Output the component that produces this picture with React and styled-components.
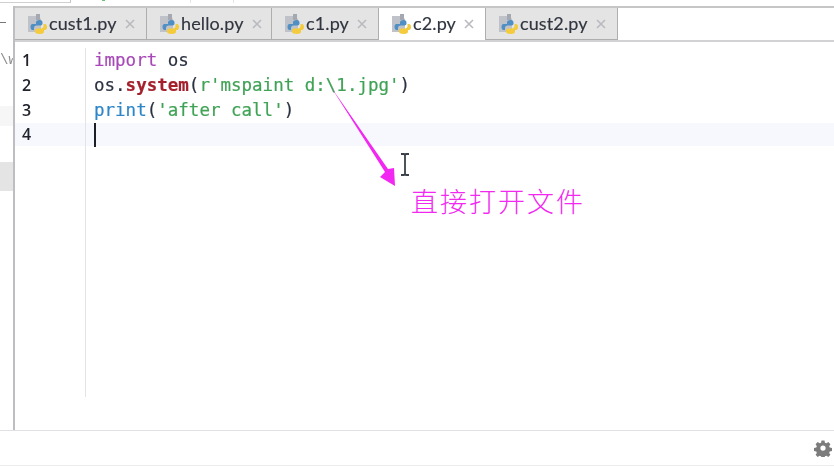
import React from 'react'
import styled, { createGlobalStyle } from 'styled-components'

const GlobalStyle = createGlobalStyle`
  html, body { margin: 0; padding: 0; background: #fff; }
  body { width: 834px; height: 466px; overflow: hidden; }
`

const Screen = styled.div`
  position: relative;
  width: 834px;
  height: 466px;
  display: flex;
  flex-direction: column;
  background: #fff;
  overflow: hidden;
`

const TopStrip = styled.div`
  height: 6px;
  display: flex;
  flex: none;
  filter: blur(0.4px);
`

const StripCell = styled.div`
  width: ${(p) => p.$w}px;
  height: 3px;
  border-right: 1px solid ${(p) => p.$line || '#e6e6e6'};
  border-bottom: ${(p) => (p.$under ? '1px solid #d0d0d0' : 'none')};
  box-sizing: border-box;
  display: flex;
`

const Speck = styled.div`
  width: 3px;
  height: 1px;
  margin-left: 31px;
  background: #6fc07a;
`

const Workspace = styled.div`
  flex: 1;
  display: flex;
  min-height: 0;
  filter: blur(0.45px);
`

const Sidebar = styled.div`
  width: 13px;
  flex: none;
  display: flex;
  flex-direction: column;
  font-family: 'Liberation Mono', monospace;
  color: #8b8b8b;
  overflow: hidden;
`

const SideDash = styled.div`
  width: 6px;
  height: 1px;
  margin: 16px 0 27px 0;
  background: #777;
`

const SideText = styled.div`
  height: 20px;
  font-size: 14px;
  line-height: 20px;
  white-space: nowrap;
`

const SideRow = styled.div`
  height: ${(p) => p.$h}px;
  margin-top: ${(p) => p.$top}px;
  background: ${(p) => p.$bg};
`

const Main = styled.div`
  flex: 1;
  min-width: 0;
  display: flex;
  flex-direction: column;
  border-left: 2px solid #bdbdc2;
  height: 425px;
`

const TabBar = styled.div`
  display: flex;
  height: 34px;
  flex: none;
  border-top: 2px solid #c6c6c6;
  box-sizing: border-box;
`

const Tab = styled.div`
  width: ${(p) => p.$w}px;
  flex: none;
  box-sizing: border-box;
  display: flex;
  align-items: center;
  padding-left: 12px;
  background: ${(p) => (p.$active ? '#fff' : '#e4e4e4')};
  border-right: 1px solid #aeaeae;
  border-bottom: ${(p) => (p.$active ? 'none' : '1px solid #aeaeae')};
  font-family: Lato, 'Liberation Sans', sans-serif;
  font-size: 18px;
  letter-spacing: 0.12px;
  color: #30353f;
  -webkit-text-stroke: 0.15px currentColor;
`

const TabName = styled.span`
  margin-left: 2px;
  position: relative;
  top: -1px;
`

const CloseMark = styled.svg`
  margin-left: 7px;
  flex: none;
`

const TabRule = styled.div`
  height: 5px;
  flex: none;
  background: #fff;
  border-top: 2px solid #d2d2d4;
  box-sizing: border-box;
`

const Editor = styled.div`
  flex: 1;
  display: flex;
  min-height: 0;
  padding-top: 3px;
`

const Gutter = styled.div`
  width: 71px;
  flex: none;
  height: 349px;
  box-sizing: border-box;
  border-right: 1px solid #e3e3ea;
  font-family: 'Open Sans', sans-serif;
  font-weight: 600;
  font-size: 16px;
  color: #20232c;
`

const GutterNum = styled.div`
  height: ${(p) => (p.$current ? 23 : 25)}px;
  line-height: ${(p) => (p.$current ? 23 : 25)}px;
  padding-left: 7px;
  background: ${(p) => (p.$current ? '#f7f8fd' : 'transparent')};
`

const Code = styled.div`
  flex: 1;
  font-family: 'DejaVu Sans Mono', monospace;
  font-size: 17.5px;
  color: #2b3140;
  -webkit-text-stroke: 0.2px currentColor;
`

const CodeLine = styled.div`
  height: ${(p) => (p.$current ? 23 : 25)}px;
  line-height: 25px;
  padding-left: 8px;
  white-space: pre;
  background: ${(p) => (p.$current ? '#f7f8fd' : 'transparent')};
  display: flex;
  align-items: center;
`

const Keyword = styled.span`
  color: #a848b8;
`

const Method = styled.span`
  color: #a3202c;
  font-weight: 700;
`

const Str = styled.span`
  color: #3fa255;
`

const Builtin = styled.span`
  color: #2e86c8;
`

const Caret = styled.span`
  width: 2px;
  height: 24px;
  background: #1c1f28;
`

const StatusBar = styled.div`
  position: absolute;
  left: 0;
  right: 0;
  bottom: 0;
  height: 36px;
  box-sizing: border-box;
  border-top: 1px solid #dfdfe4;
  border-bottom: 1px solid #ececec;
  background: #fff;
  display: flex;
  align-items: center;
  justify-content: flex-end;
  padding-right: 2px;
`

const Arrow = styled.svg`
  position: absolute;
  left: 325px;
  top: 80px;
`

const TextCursor = styled.svg`
  position: absolute;
  left: 399px;
  top: 152px;
`

const Note = styled.div`
  position: absolute;
  left: 411px;
  top: 182px;
  font-family: 'Noto Sans CJK SC', sans-serif;
  font-weight: 300;
  font-size: 27px;
  letter-spacing: 2px;
  line-height: 38px;
  color: #f227f2;
  white-space: nowrap;
`

const PyIcon = () => (
  <svg width="20" height="22" viewBox="0 0 20 22" style={{ flex: 'none' }}>
    <path d="M1 3h10l3 3v13H1z" fill="#bfc2c9" />
    <path d="M9 1h4v6H9z" fill="#a4a8b0" />
    <path d="M13 7c-3 0-4 1-4 2.500v1.500H5.500C4 11 3.500 12.500 3.500 14s.7 3 2 3H7v-2c0-1.500 1-2.500 2.500-2.500h4c1 0 2-.8 2-2V9.500C15.500 8 14.500 7 13 7z" fill="#4f8fc4" />
    <path d="M13 21c3 0 4-1 4-2.500V17h1c1.500 0 2-1.500 2-3s-.7-3-2-3h-1.500v2c0 1.500-1 2.500-2.500 2.500h-4c-1 0-2 .8-2 2v1.500C8 20 10 21 13 21z" fill="#f4cb3c" />
  </svg>
)

const Close = () => (
  <CloseMark width="12" height="12" viewBox="0 0 12 12">
    <path d="M2 2l8 8M10 2l-8 8" stroke="#b8babe" strokeWidth="1.600" fill="none" />
  </CloseMark>
)

const Gear = () => (
  <svg width="18" height="18" viewBox="0 0 24 24" fill="#7c7c7c">
    <path d="M10 2h4l.6 3 1.900.8 2.600-1.700 2.800 2.800-1.700 2.600.8 1.900 3 .6v4l-3 .6-.8 1.900 1.700 2.600-2.800 2.800-2.600-1.700-1.900.8-.6 3h-4l-.6-3-1.900-.8-2.600 1.700-2.800-2.800 1.700-2.600-.8-1.900-3-.6v-4l3-.6.8-1.900-1.700-2.600 2.800-2.800 2.600 1.700 1.900-.8zM12 8.500a3.500 3.500 0 1 0 0 7 3.500 3.500 0 0 0 0-7z" fillRule="evenodd" />
  </svg>
)

const tabs = [
  { name: 'cust1.py', w: 132 },
  { name: 'hello.py', w: 125 },
  { name: 'c1.py', w: 107 },
  { name: 'c2.py', w: 107, active: true },
  { name: 'cust2.py', w: 132 },
]

function App() {
  return (
    <Screen>
      <GlobalStyle />
      <TopStrip>
        <StripCell $w={71} $under $line="#c4c4c4" />
        <StripCell $w={120}><Speck /></StripCell>
        <StripCell $w={43} />
      </TopStrip>
      <Workspace>
        <Sidebar>
          <SideDash />
          <SideText>\w</SideText>
          <SideRow $h={20} $top={36} $bg="#f6f6f6" />
          <SideRow $h={29} $top={36} $bg="#e4e4e4" />
        </Sidebar>
        <Main>
          <TabBar>
            {tabs.map((t) => (
              <Tab key={t.name} $w={t.w} $active={t.active}>
                <PyIcon />
                <TabName>{t.name}</TabName>
                <Close />
              </Tab>
            ))}
          </TabBar>
          <TabRule />
          <Editor>
            <Gutter>
              <GutterNum>1</GutterNum>
              <GutterNum>2</GutterNum>
              <GutterNum>3</GutterNum>
              <GutterNum $current>4</GutterNum>
            </Gutter>
            <Code>
              <CodeLine><span><Keyword>import</Keyword> os</span></CodeLine>
              <CodeLine><span>os.<Method>system</Method>(<Str>r'mspaint d:\1.jpg'</Str>)</span></CodeLine>
              <CodeLine><span><Builtin>print</Builtin>(<Str>'after call'</Str>)</span></CodeLine>
              <CodeLine $current><Caret /></CodeLine>
            </Code>
          </Editor>
        </Main>
      </Workspace>
      <StatusBar>
        <Gear />
      </StatusBar>
      <Arrow width="80" height="115" viewBox="0 0 80 115">
        <path d="M6 7L63 89L69 88L70 106L55 97L60 92Z" fill="#f227f2" />
      </Arrow>
      <TextCursor width="12" height="26" viewBox="0 0 12 26">
        <path d="M2 2h3l1 1 1-1h3M6 3v19M2 23h3l1-1 1 1h3" stroke="#3c4048" strokeWidth="1.800" fill="none" />
      </TextCursor>
      <Note>直接打开文件</Note>
    </Screen>
  )
}

export default App
